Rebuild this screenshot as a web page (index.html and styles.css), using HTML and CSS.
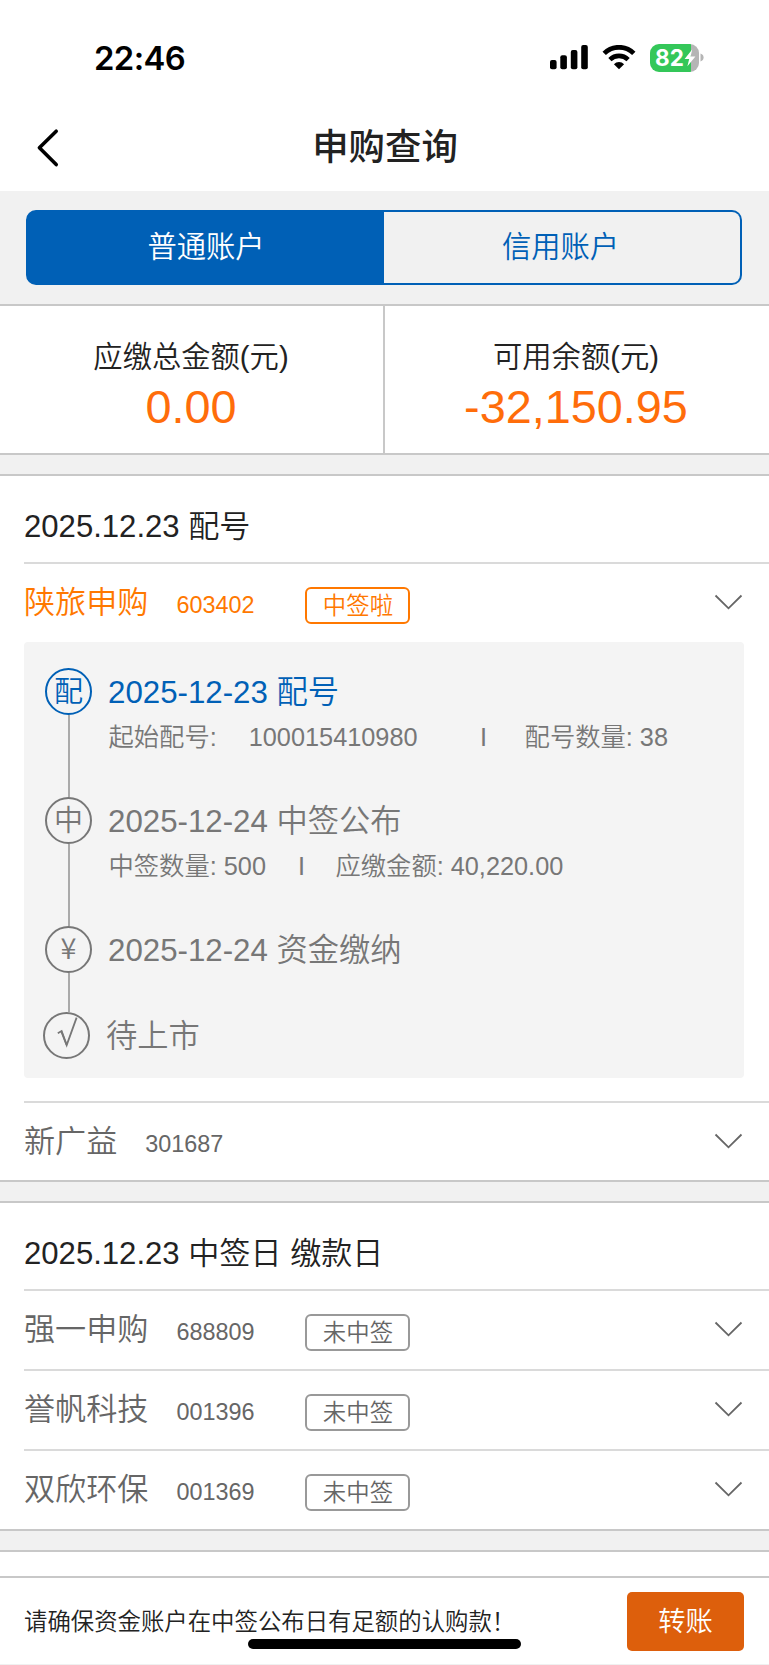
FILE: index.html
```html
<!DOCTYPE html>
<html lang="zh-CN">
<head>
  <meta charset="UTF-8" />
  <meta name="viewport" content="width=device-width, initial-scale=1.0"/>
  <title>申购查询</title>
  <link rel="stylesheet" href="styles.css">
</head>
<body>
  <div class="status-bar">
    <span class="time">22:46</span>
    <div class="status-icons">
      <svg class="signal" width="38" height="25" viewBox="0 0 38 25">
        <rect x="0" y="15" width="6.6" height="9.3" rx="2"/>
        <rect x="10.3" y="10.3" width="6.6" height="14" rx="2"/>
        <rect x="20.8" y="5" width="6.6" height="19.3" rx="2"/>
        <rect x="31.2" y="0" width="6.6" height="24.3" rx="2"/>
      </svg>
      <svg class="wifi" width="34" height="25" viewBox="0 0 34 25">
        <path d="M2.2 8.4 A21 21 0 0 1 31.8 8.4" fill="none" stroke="#000" stroke-width="4.8"/>
        <path d="M7.9 14.6 A13 13 0 0 1 26.1 14.6" fill="none" stroke="#000" stroke-width="4.6"/>
        <path d="M17 24.3 L11.9 19.2 A7.3 7.3 0 0 1 22.1 19.2 Z"/>
      </svg>
      <div class="battery">
        <span class="battery-level">82</span>
        <svg class="bolt" width="12" height="18" viewBox="0 0 12 18"><path d="M8.2 0.5 L0.6 10 H5.2 L3.4 17.2 L11.4 7.4 H6.6 Z" fill="#fff"/></svg>
      </div>
      <svg class="battery-cap" width="4" height="9" viewBox="0 0 4 9"><path d="M0.5 0.5 Q3.6 1.6 3.6 4.5 Q3.6 7.4 0.5 8.5 Z" fill="#b5b5b5"/></svg>
    </div>
  </div>

  <header class="nav">
    <svg class="back" width="24" height="40" viewBox="0 0 24 40"><path d="M20.2 3.2 L3.4 19.7 L20.2 36.6" fill="none" stroke="#000" stroke-width="3.6" stroke-linecap="round" stroke-linejoin="round"/></svg>
    <h1>申购查询</h1>
  </header>

  <div class="tabs-wrap">
    <div class="tabs">
      <div class="tab active">普通账户</div>
      <div class="tab">信用账户</div>
    </div>
  </div>

  <div class="summary">
    <div class="summary-item">
      <div class="summary-label">应缴总金额(元)</div>
      <div class="summary-value">0.00</div>
    </div>
    <div class="summary-item">
      <div class="summary-label">可用余额(元)</div>
      <div class="summary-value">-32,150.95</div>
    </div>
  </div>

  <section class="group">
    <h2>2025.12.23 配号</h2>
    <div class="row win">
      <span class="name">陕旅申购</span>
      <span class="code">603402</span>
      <span class="tag">中签啦</span>
      <svg class="arrow" width="29" height="17" viewBox="0 0 29 17"><path d="M1.5 1.5 L14.5 14.3 L27.5 1.5"/></svg>
    </div>
    <div class="timeline">
      <div class="step current">
        <div class="marker"><span class="dot">配</span></div>
        <div class="step-body">
          <div class="step-title">2025-12-23 配号</div>
          <div class="step-info wide"><span>起始配号:</span><span class="start-no">100015410980</span><span class="sep">I</span><span>配号数量: 38</span></div>
        </div>
      </div>
      <div class="step">
        <div class="marker"><span class="dot">中</span></div>
        <div class="step-body">
          <div class="step-title">2025-12-24 中签公布</div>
          <div class="step-info"><span>中签数量: 500</span><span class="sep">I</span><span>应缴金额: 40,220.00</span></div>
        </div>
      </div>
      <div class="step short">
        <div class="marker"><span class="dot yuan">¥</span></div>
        <div class="step-body">
          <div class="step-title">2025-12-24 资金缴纳</div>
        </div>
      </div>
      <div class="step last">
        <div class="marker">
          <span class="dot"><svg class="check" width="43" height="43" viewBox="2 2 43 43"><path d="M14.8 21.2 L18.6 19 L23.7 33 L33.6 5.6"/><path d="M18.2 19.2 L23.6 33"/></svg></span>
        </div>
        <div class="step-body">
          <div class="step-title">待上市</div>
        </div>
      </div>
    </div>
    <div class="row">
      <span class="name">新广益</span>
      <span class="code">301687</span>
      <svg class="arrow" width="29" height="17" viewBox="0 0 29 17"><path d="M1.5 1.5 L14.5 14.3 L27.5 1.5"/></svg>
    </div>
  </section>

  <section class="group">
    <h2>2025.12.23 中签日 缴款日</h2>
    <div class="row">
      <span class="name">强一申购</span>
      <span class="code">688809</span>
      <span class="tag">未中签</span>
      <svg class="arrow" width="29" height="17" viewBox="0 0 29 17"><path d="M1.5 1.5 L14.5 14.3 L27.5 1.5"/></svg>
    </div>
    <div class="row">
      <span class="name">誉帆科技</span>
      <span class="code">001396</span>
      <span class="tag">未中签</span>
      <svg class="arrow" width="29" height="17" viewBox="0 0 29 17"><path d="M1.5 1.5 L14.5 14.3 L27.5 1.5"/></svg>
    </div>
    <div class="row">
      <span class="name">双欣环保</span>
      <span class="code">001369</span>
      <span class="tag">未中签</span>
      <svg class="arrow" width="29" height="17" viewBox="0 0 29 17"><path d="M1.5 1.5 L14.5 14.3 L27.5 1.5"/></svg>
    </div>
  </section>

  <section class="group next"></section>

  <footer class="footer">
    <span class="notice">请确保资金账户在中签公布日有足额的认购款！</span>
    <button type="button">转账</button>
    <div class="home-indicator"></div>
  </footer>
</body>
</html>
```
FILE: styles.css
```css
* {
  box-sizing: border-box;
}
body {
  margin: 0;
  height: 1665px;
  display: flex;
  flex-direction: column;
  overflow: hidden;
  background: #f1f1f1;
  color: #222;
  font-family: "Liberation Sans", "Noto Sans CJK SC", sans-serif;
  font-weight: 350;
}
h1, h2 {
  margin: 0;
}

/* status bar */
.status-bar {
  height: 103px;
  padding: 38px 65px 0 94px;
  display: flex;
  justify-content: space-between;
  align-items: flex-start;
  background: #fff;
}
.time {
  font-family: Inter, sans-serif;
  font-size: 32.8px;
  font-weight: 600;
  line-height: 40px;
  letter-spacing: -0.6px;
  color: #000;
}
.status-icons {
  display: flex;
  align-items: center;
  height: 39px;
}
.wifi {
  margin: 0 14px 0 14px;
}
.battery {
  width: 49px;
  height: 28px;
  padding-left: 5px;
  display: flex;
  align-items: center;
  border-radius: 9px;
  background: linear-gradient(to right, #34c759 41px, #b5b5b5 41px);
}
.battery-level {
  font-family: Inter, sans-serif;
  font-size: 22.5px;
  font-weight: 700;
  line-height: 28px;
  color: #fff;
}
.battery-cap {
  margin-left: 1px;
}

/* title bar */
.nav {
  height: 88px;
  display: grid;
  grid-template-columns: 60px 1fr 60px;
  background: #fff;
}
.back {
  margin: 25px 0 0 36px;
}
.nav h1 {
  padding-left: 1px;
  text-align: center;
  font-size: 36.4px;
  font-weight: 500;
  line-height: 90px;
}

/* account tabs */
.tabs-wrap {
  height: 113px;
  padding: 19px 27px 0 26px;
}
.tabs {
  height: 75px;
  display: grid;
  grid-template-columns: 358px 1fr;
}
.tab {
  padding-right: 3px;
  border: 2px solid #0060b6;
  border-left: 0;
  border-radius: 0 10px 10px 0;
  text-align: center;
  font-size: 29.3px;
  line-height: 70px;
  color: #0060b6;
}
.tab.active {
  padding: 0 0 0 2px;
  border: 2px solid #0060b6;
  border-radius: 10px 0 0 10px;
  background: #0060b6;
  color: #fff;
}

/* amounts */
.summary {
  height: 151px;
  display: grid;
  grid-template-columns: 385px 1fr;
  border-top: 2px solid #c8c8c8;
  border-bottom: 2px solid #c8c8c8;
  background: #fff;
}
.summary-item {
  padding: 29px 2px 0 0;
  text-align: center;
}
.summary-item:first-child {
  padding-right: 1px;
  border-right: 2px solid #c8c8c8;
}
.summary-label {
  font-size: 29.3px;
  line-height: 44px;
}
.summary-value {
  font-size: 46.8px;
  line-height: 57px;
  color: #ff6d0a;
}

/* subscription groups */
.group {
  margin-top: 19px;
  border-top: 2px solid #c8c8c8;
  border-bottom: 2px solid #c8c8c8;
  background: #fff;
}
.group h2 {
  height: 86px;
  padding: 15px 0 0 24px;
  font-size: 31.1px;
  font-weight: 350;
  line-height: 72px;
}
.row {
  height: 80px;
  margin-left: 24px;
  padding-right: 26px;
  display: flex;
  align-items: baseline;
  border-top: 2px solid #dadada;
  color: #666;
}
.name {
  font-size: 31.1px;
  line-height: 77px;
}
.code {
  margin-left: 28px;
  font-size: 23.4px;
}
.tag {
  width: 105px;
  height: 37px;
  margin: 23px 0 0 51px;
  align-self: flex-start;
  border: 2px solid #999;
  border-radius: 6px;
  text-align: center;
  font-size: 23.4px;
  line-height: 35px;
}
.arrow {
  margin: 30px 0 0 auto;
  align-self: flex-start;
}
.arrow path {
  fill: none;
  stroke: #666;
  stroke-width: 1.8;
}
.win .name, .win .code, .win .tag {
  color: #ff7800;
}
.win .tag {
  border-color: #ff7800;
}

/* progress of one subscription */
.timeline {
  height: 436px;
  margin: 0 25px 23px 24px;
  padding: 26px 0 0 21px;
  border-radius: 4px;
  background: #f4f4f4;
  color: #777;
}
.timeline + .row {
  height: 79px;
}
.step {
  height: 129px;
  display: flex;
  gap: 16px;
}
.marker {
  width: 47px;
  display: flex;
  flex-direction: column;
  align-items: center;
}
.marker::after {
  content: "";
  flex: 1;
  width: 2px;
  background: #aaa;
}
.dot {
  width: 47px;
  height: 47px;
  border: 2px solid #777;
  border-radius: 50%;
  text-align: center;
  font-family: "Noto Sans CJK SC", sans-serif;
  font-size: 29px;
  line-height: 39px;
}
.dot.yuan {
  line-height: 36px;
}
.current .dot {
  border-color: #0060b6;
  color: #0060b6;
}
.check {
  display: block;
}
.check path {
  fill: none;
  stroke: #777;
  stroke-width: 1.8;
}
.step.short {
  height: 86px;
}
.step.last {
  height: 47px;
  margin-left: -2px;
}
.step-title {
  font-size: 31.25px;
  line-height: 48px;
  padding-top: 1px;
  margin-bottom: -1px;
}
.current .step-title {
  color: #0060b6;
}
.step-info {
  padding-left: 0.5px;
  display: flex;
  font-size: 25.3px;
  line-height: 42px;
  white-space: pre;
}
.sep {
  margin: 0 30.5px 0 32px;
}
.start-no {
  margin-left: 32px;
}
.wide .sep {
  margin: 0 37.5px 0 62.5px;
}

.next {
  height: 40px;
  border-bottom: 0;
}

/* bottom bar */
.footer {
  position: fixed;
  left: 0;
  right: 0;
  bottom: 0;
  height: 89px;
  padding: 1px 25px 0 24px;
  display: flex;
  justify-content: space-between;
  align-items: center;
  border-top: 2px solid #c8c8c8;
  border-bottom: 1px solid #f0f0f0;
  background: #fff;
}
.notice {
  padding-bottom: 4px;
  font-size: 23.4px;
}
.footer button {
  width: 117px;
  height: 59px;
  padding: 0 0 5px;
  border: 0;
  border-radius: 5px;
  background: #dd5f0c;
  color: #fff;
  font-family: inherit;
  font-size: 27.3px;
  font-weight: 350;
}
.home-indicator {
  position: absolute;
  left: 248px;
  bottom: 15px;
  width: 273px;
  height: 10px;
  border-radius: 5px;
  background: #000;
}
```
